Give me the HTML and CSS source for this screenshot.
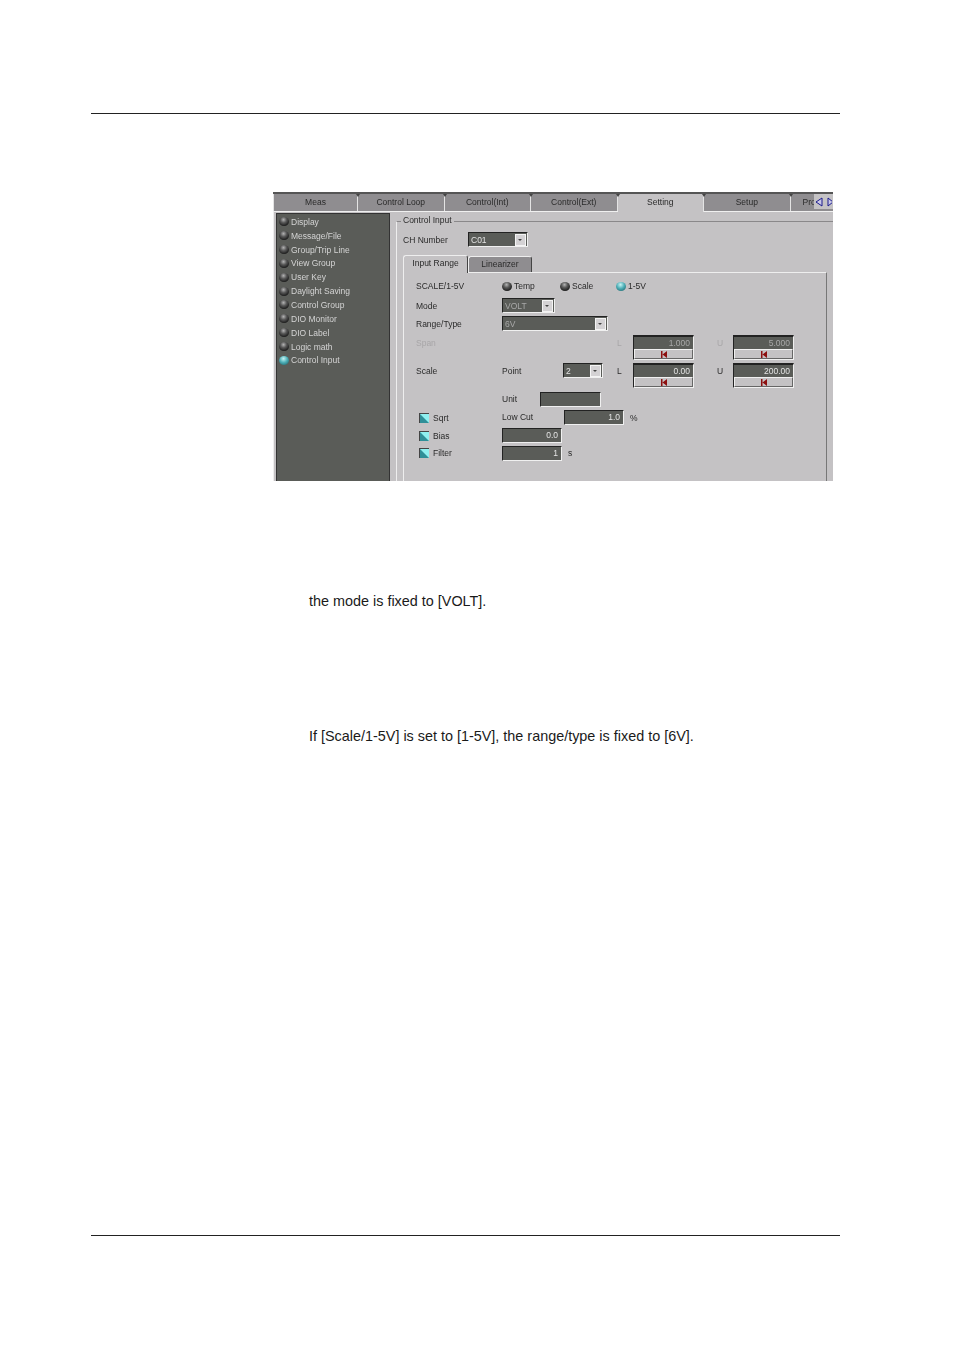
FILE: index.html
```html
<!DOCTYPE html>
<html lang="en">
<head>
    <meta charset="UTF-8">
    <meta name="viewport" content="width=device-width, initial-scale=1.0">
    <title>Control Input</title>
    <link rel="stylesheet" href="styles.css">
</head>
<body>
    <hr class="rule rule-top">

    <div class="shot">
        <div class="tabs">
            <div class="tab">Meas</div>
            <div class="tab">Control Loop</div>
            <div class="tab">Control(Int)</div>
            <div class="tab">Control(Ext)</div>
            <div class="tab active">Setting</div>
            <div class="tab">Setup</div>
            <div class="tab tab-cut">Pro</div>
            <div class="tab-arrows">
                <svg width="11" height="12" viewBox="0 0 11 12"><path d="M8 2 L2 6 L8 10 Z" fill="#c9c7e8" stroke="#1a1a8c"/></svg>
                <svg width="6" height="12" viewBox="0 0 6 12"><path d="M2 2 L7 6 L2 10 Z" fill="#c9c7e8" stroke="#1a1a8c"/></svg>
            </div>
        </div>

        <div class="body">
            <ul class="side">
                <li><i class="led"></i>Display</li>
                <li><i class="led"></i>Message/File</li>
                <li><i class="led"></i>Group/Trip Line</li>
                <li><i class="led"></i>View Group</li>
                <li><i class="led"></i>User Key</li>
                <li><i class="led"></i>Daylight Saving</li>
                <li><i class="led"></i>Control Group</li>
                <li><i class="led"></i>DIO Monitor</li>
                <li><i class="led"></i>DIO Label</li>
                <li><i class="led"></i>Logic math</li>
                <li><i class="led on"></i>Control Input</li>
            </ul>

            <div class="group">
                <div class="group-title">Control Input</div>

                <div class="ch-row">
                    <span class="ch-label">CH Number</span>
                    <div class="combo combo-ch"><span>C01</span><b class="drop"></b></div>
                </div>

                <div class="subtabs">
                    <div class="subtab active">Input Range</div>
                    <div class="subtab">Linearizer</div>
                </div>

                <div class="panel">
                    <div class="row row-scale">
                        <span class="c-label">SCALE/1-5V</span>
                        <div class="radios">
                            <span class="radio r1"><i class="led"></i>Temp</span>
                            <span class="radio r2"><i class="led"></i>Scale</span>
                            <span class="radio"><i class="led on"></i>1-5V</span>
                        </div>
                    </div>
                    <div class="row row-mode">
                        <span class="c-label">Mode</span>
                        <div class="combo combo-mode off"><span>VOLT</span><b class="drop"></b></div>
                    </div>
                    <div class="row row-range">
                        <span class="c-label">Range/Type</span>
                        <div class="combo combo-range off"><span>6V</span><b class="drop"></b></div>
                    </div>
                    <div class="row row-span off-text">
                        <span class="c-label">Span</span>
                        <span class="c-mid"></span>
                        <span class="c-l">L</span>
                        <div class="spin off">
                            <div class="spin-val">1.000</div>
                            <div class="spin-btn"><svg width="6" height="7" viewBox="0 0 6 7"><path d="M0 0 H1.5 V7 H0 Z M6 0 V7 L1.5 3.5 Z" fill="#8c1010"/></svg></div>
                        </div>
                        <span class="c-u">U</span>
                        <div class="spin off">
                            <div class="spin-val">5.000</div>
                            <div class="spin-btn"><svg width="6" height="7" viewBox="0 0 6 7"><path d="M0 0 H1.5 V7 H0 Z M6 0 V7 L1.5 3.5 Z" fill="#8c1010"/></svg></div>
                        </div>
                    </div>
                    <div class="row row-pt">
                        <span class="c-label">Scale</span>
                        <span class="c-point">Point</span>
                        <div class="combo combo-pt"><span>2</span><b class="drop"></b></div>
                        <span class="c-l">L</span>
                        <div class="spin">
                            <div class="spin-val">0.00</div>
                            <div class="spin-btn"><svg width="6" height="7" viewBox="0 0 6 7"><path d="M0 0 H1.5 V7 H0 Z M6 0 V7 L1.5 3.5 Z" fill="#8c1010"/></svg></div>
                        </div>
                        <span class="c-u">U</span>
                        <div class="spin">
                            <div class="spin-val">200.00</div>
                            <div class="spin-btn"><svg width="6" height="7" viewBox="0 0 6 7"><path d="M0 0 H1.5 V7 H0 Z M6 0 V7 L1.5 3.5 Z" fill="#8c1010"/></svg></div>
                        </div>
                    </div>
                    <div class="row row-unit">
                        <span class="c-label"></span>
                        <span class="c-unit">Unit</span>
                        <div class="field field-unit"></div>
                    </div>
                    <div class="row row-sqrt">
                        <span class="c-label"><i class="check"></i>Sqrt</span>
                        <span class="c-lowcut">Low Cut</span>
                        <div class="field field-cut">1.0</div>
                        <span class="c-after">%</span>
                    </div>
                    <div class="row row-bias">
                        <span class="c-label"><i class="check"></i>Bias</span>
                        <div class="field field-wide">0.0</div>
                    </div>
                    <div class="row row-filter">
                        <span class="c-label"><i class="check"></i>Filter</span>
                        <div class="field field-wide">1</div>
                        <span class="c-after">s</span>
                    </div>
                </div>
            </div>
        </div>
    </div>

    <p class="note note-mode">the mode is fixed to [VOLT].</p>
    <p class="note note-range">If [Scale/1-5V] is set to [1-5V], the range/type is fixed to [6V].</p>

    <hr class="rule rule-bottom">
</body>
</html>
```

FILE: styles.css
```css
html, body {
    margin: 0;
    padding: 0;
    background: #ffffff;
}

body {
    width: 954px;
    height: 1350px;
    overflow: hidden;
    font-family: "Liberation Sans", Arial, sans-serif;
    color: #1a1a1a;
}

.rule {
    border: 0;
    height: 1px;
    background: #222222;
    width: 749px;
    margin: 0 0 0 91px;
}

.rule-top {
    margin-top: 113px;
}

.rule-bottom {
    margin-top: 491px;
}

.note {
    margin: 0 0 0 309px;
    font-size: 14.4px;
    line-height: 16px;
}

.note-mode {
    margin-top: 112px;
}

.note-range {
    margin-top: 119px;
}

/* screenshot */
.shot {
    width: 560px;
    height: 289px;
    margin: 78px 0 0 273px;
    background: #c4c2c4;
    overflow: hidden;
    font-size: 8.5px;
    line-height: 10px;
    color: #2a2a2a;
    filter: blur(0.35px);
}

.tabs {
    position: relative;
    display: flex;
    height: 17px;
    border-top: 2px solid #555555;
    background: #8f8d90;
    border-bottom: 1px solid #f0f0f0;
}

.tab {
    position: relative;
    width: 86.5px;
    flex: none;
    box-sizing: border-box;
    text-align: center;
    line-height: 16px;
    border-right: 1px solid #e4e4e4;
}

.tab:first-child {
    width: 85px;
    border-left: 1px solid #e4e4e4;
}

/* small dark notch on top of each divider */
.tab::after {
    content: "";
    position: absolute;
    top: 0;
    right: -3px;
    border: 2px solid transparent;
    border-top: 3px solid #444444;
    z-index: 1;
}

.tab.active {
    background: #c4c2c4;
    height: 18px;
}

.tab-cut {
    text-align: left;
    padding-left: 12px;
    border-right: 0;
}

.tab-cut::after {
    display: none;
}

.tab-arrows {
    position: absolute;
    right: 0;
    top: 0;
    display: flex;
    gap: 1px;
    width: 19px;
    height: 15px;
    align-items: center;
    background: #c4c2c4;
    z-index: 2;
}

.body {
    display: flex;
    height: 270px;
    border-left: 1px solid #eeeeee;
}

.side {
    flex: none;
    list-style: none;
    width: 114px;
    height: 269px;
    box-sizing: border-box;
    margin: 1px 0 0 2px;
    padding: 1px 0 0 2px;
    background: #5a5c58;
    color: #d4d4d4;
    border-top: 1px solid #333333;
    border-right: 1px solid #333333;
    border-left: 1px solid #333333;
}

.side li {
    display: flex;
    align-items: center;
    gap: 2px;
    height: 13.85px;
}

.led {
    display: block;
    flex: none;
    width: 10px;
    height: 9px;
    border-radius: 50%;
    background: radial-gradient(circle at 45% 30%, #b4b4b4 0%, #5a5a5a 35%, #0c0c0c 85%);
}

.led.on {
    background: radial-gradient(circle at 45% 30%, #c8f4f4 0%, #4fb0b8 45%, #16555c 100%);
}

.group {
    flex: none;
    position: relative;
    width: 430px;
    margin-left: 6px;
    margin-top: 9px;
    border-top: 1px solid #8a888a;
    border-left: 1px solid #eeeeee;
    padding-left: 6px;
}

.group-title {
    position: absolute;
    top: -7px;
    left: 4px;
    padding: 0 2px;
    background: #c4c2c4;
}

.ch-row {
    display: flex;
    align-items: center;
    height: 15px;
    margin-top: 10px;
}

.ch-label {
    width: 65px;
}

.combo {
    display: flex;
    align-items: center;
    justify-content: space-between;
    box-sizing: border-box;
    height: 15px;
    padding: 0 1px 0 2px;
    background: #5a5c58;
    color: #e4e4e4;
    border-top: 1px solid #222222;
    border-left: 1px solid #222222;
    border-right: 1px solid #f0f0f0;
    border-bottom: 1px solid #f0f0f0;
}

.combo.off {
    color: #a8a8a8;
}

.drop {
    position: relative;
    display: block;
    width: 11px;
    height: 12px;
    background: #d4d2d4;
    border: 1px solid #f4f4f4;
    box-sizing: border-box;
}

.drop::after {
    content: "";
    position: absolute;
    left: 2px;
    top: 4px;
    border: 2px solid transparent;
    border-top: 2px solid #444444;
}

.combo-ch {
    width: 60px;
}

.combo-mode {
    width: 53px;
}

.combo-range {
    width: 106px;
}

.combo-pt {
    width: 40px;
}

.subtabs {
    display: flex;
    align-items: flex-end;
    height: 17px;
    margin-top: 8px;
}

.subtab {
    box-sizing: border-box;
    width: 64px;
    height: 16px;
    text-align: center;
    line-height: 15px;
    background: #8f8d90;
    border: 1px solid #eeeeee;
    border-bottom: 0;
    border-right-color: #444444;
    border-radius: 3px 3px 0 0;
}

.subtab.active {
    width: 65px;
    height: 18px;
    margin-bottom: -1px;
    position: relative;
    background: #c4c2c4;
}

.panel {
    width: 424px;
    height: 220px;
    box-sizing: border-box;
    border-top: 1px solid #eeeeee;
    border-left: 1px solid #eeeeee;
    border-right: 1px solid #777777;
    padding-left: 12px;
}

.row {
    display: flex;
    align-items: center;
}

.c-label {
    display: flex;
    align-items: center;
    width: 86px;
    flex: none;
}

.check {
    display: block;
    box-sizing: border-box;
    width: 10px;
    height: 10px;
    margin: 0 4px 0 3px;
    background: linear-gradient(45deg, #2f8f98 0 45%, #8ff0f0 55% 100%);
    border-top: 1px solid #444444;
    border-left: 1px solid #444444;
}

.radios {
    display: flex;
}

.radio {
    display: flex;
    align-items: center;
    gap: 2px;
    width: 58px;
}

.r2 {
    width: 56px;
}

.row-scale {
    height: 14px;
    margin-top: 6px;
}

.row-mode {
    height: 15px;
    margin-top: 5px;
}

.row-range {
    height: 15px;
    margin-top: 3px;
}

/* labels on the spinner rows sit level with the value, not the button */
.row-span,
.row-pt {
    height: 25px;
    align-items: flex-start;
    line-height: 16px;
}

.row-span {
    margin-top: 4px;
}

.row-pt {
    margin-top: 3px;
}

.row-unit {
    height: 15px;
    margin-top: 4px;
}

.row-sqrt {
    height: 15px;
    margin-top: 3px;
}

.row-bias {
    height: 15px;
    margin-top: 3px;
}

.row-filter {
    height: 16px;
    margin-top: 2px;
}

.off-text {
    color: #a8a6a8;
}

.c-mid {
    width: 101px;
    flex: none;
}

.c-point {
    width: 61px;
    flex: none;
}

.c-unit {
    width: 38px;
    flex: none;
    padding-bottom: 2px;
}

.c-lowcut {
    width: 62px;
    flex: none;
    padding-bottom: 2px;
}

.c-l {
    width: 16px;
    margin-left: 14px;
    flex: none;
}

.c-u {
    width: 16px;
    margin-left: 23px;
    flex: none;
}

.c-after {
    margin-left: 6px;
}

.spin {
    width: 61px;
    height: 25px;
    flex: none;
    box-sizing: border-box;
    border-top: 2px solid #222222;
    border-left: 1px solid #222222;
    border-right: 1px solid #f0f0f0;
    border-bottom: 1px solid #f0f0f0;
}

.spin-val {
    height: 12px;
    line-height: 12px;
    text-align: right;
    padding-right: 3px;
    background: #5a5c58;
    color: #e4e4e4;
}

.spin.off .spin-val {
    color: #a8a8a8;
}

.spin-btn {
    display: flex;
    justify-content: center;
    align-items: center;
    box-sizing: border-box;
    height: 10px;
    background: #c4c2c4;
    border: 1px solid #f0f0f0;
    border-right-color: #666666;
    border-bottom-color: #666666;
}

.field {
    box-sizing: border-box;
    height: 15px;
    line-height: 13px;
    text-align: right;
    padding-right: 3px;
    background: #5a5c58;
    color: #e4e4e4;
    border-top: 1px solid #222222;
    border-left: 1px solid #222222;
    border-right: 1px solid #f0f0f0;
    border-bottom: 1px solid #f0f0f0;
}

.field-unit {
    width: 61px;
}

.field-cut {
    width: 60px;
}

.field-wide {
    width: 60px;
}
```
